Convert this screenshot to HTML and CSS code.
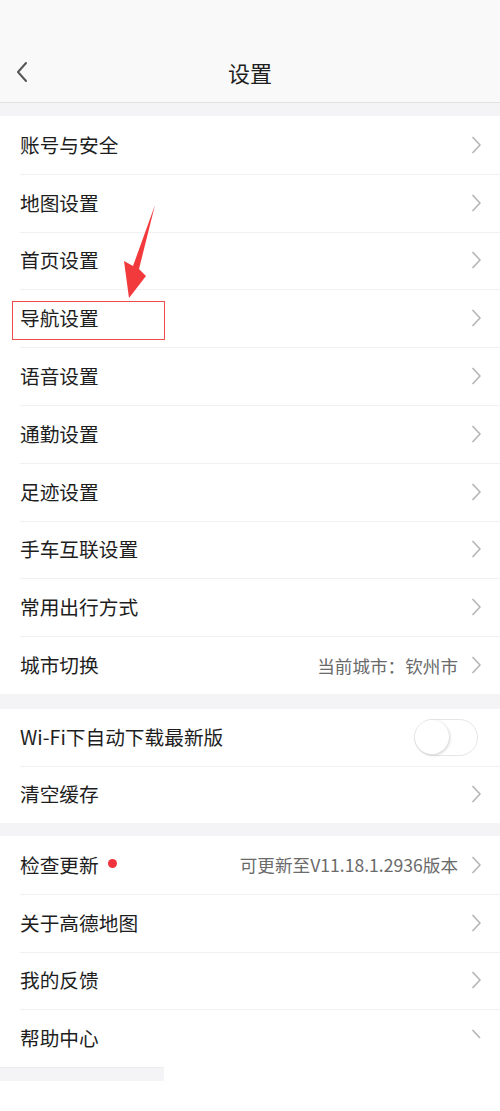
FILE: index.html
```html
<!DOCTYPE html>
<html lang="zh-CN">
<head>
<meta charset="utf-8">
<title>设置</title>
<link rel="stylesheet" href="styles.css">
</head>
<body>
<div class="page">
  <header class="topbar">
    <svg class="back" width="14" height="22" viewBox="0 0 14 22"><path d="M11 2 L3 11 L11 20" fill="none" stroke="#555" stroke-width="2" stroke-linecap="round" stroke-linejoin="round"/></svg>
    <h1 class="title">设置</h1>
  </header>

  <section class="group g1">
    <div class="row"><span class="label">账号与安全</span><svg class="chev" viewBox="0 0 10 18"><path d="M1.5 1 L9 9 L1.5 17" fill="none" stroke="#b4b4b4" stroke-width="1.6"/></svg></div>
    <div class="row"><span class="label">地图设置</span><svg class="chev" viewBox="0 0 10 18"><path d="M1.5 1 L9 9 L1.5 17" fill="none" stroke="#b4b4b4" stroke-width="1.6"/></svg></div>
    <div class="row"><span class="label">首页设置</span><svg class="chev" viewBox="0 0 10 18"><path d="M1.5 1 L9 9 L1.5 17" fill="none" stroke="#b4b4b4" stroke-width="1.6"/></svg></div>
    <div class="row row-marked"><span class="label">导航设置</span><svg class="chev" viewBox="0 0 10 18"><path d="M1.5 1 L9 9 L1.5 17" fill="none" stroke="#b4b4b4" stroke-width="1.6"/></svg><span class="mark-box"></span></div>
    <div class="row"><span class="label">语音设置</span><svg class="chev" viewBox="0 0 10 18"><path d="M1.5 1 L9 9 L1.5 17" fill="none" stroke="#b4b4b4" stroke-width="1.6"/></svg></div>
    <div class="row"><span class="label">通勤设置</span><svg class="chev" viewBox="0 0 10 18"><path d="M1.5 1 L9 9 L1.5 17" fill="none" stroke="#b4b4b4" stroke-width="1.6"/></svg></div>
    <div class="row"><span class="label">足迹设置</span><svg class="chev" viewBox="0 0 10 18"><path d="M1.5 1 L9 9 L1.5 17" fill="none" stroke="#b4b4b4" stroke-width="1.6"/></svg></div>
    <div class="row"><span class="label">手车互联设置</span><svg class="chev" viewBox="0 0 10 18"><path d="M1.5 1 L9 9 L1.5 17" fill="none" stroke="#b4b4b4" stroke-width="1.6"/></svg></div>
    <div class="row"><span class="label">常用出行方式</span><svg class="chev" viewBox="0 0 10 18"><path d="M1.5 1 L9 9 L1.5 17" fill="none" stroke="#b4b4b4" stroke-width="1.6"/></svg></div>
    <div class="row"><span class="label">城市切换</span><span class="value">当前城市：钦州市</span><svg class="chev" viewBox="0 0 10 18"><path d="M1.5 1 L9 9 L1.5 17" fill="none" stroke="#b4b4b4" stroke-width="1.6"/></svg></div>
  </section>

  <section class="group g2">
    <div class="row"><span class="label">Wi-Fi下自动下载最新版</span><span class="toggle"><span class="knob"></span></span></div>
    <div class="row"><span class="label">清空缓存</span><svg class="chev" viewBox="0 0 10 18"><path d="M1.5 1 L9 9 L1.5 17" fill="none" stroke="#b4b4b4" stroke-width="1.6"/></svg></div>
  </section>

  <section class="group g3">
    <div class="row"><span class="label">检查更新</span><span class="dot"></span><span class="value">可更新至V11.18.1.2936版本</span><svg class="chev" viewBox="0 0 10 18"><path d="M1.5 1 L9 9 L1.5 17" fill="none" stroke="#b4b4b4" stroke-width="1.6"/></svg></div>
    <div class="row"><span class="label">关于高德地图</span><svg class="chev" viewBox="0 0 10 18"><path d="M1.5 1 L9 9 L1.5 17" fill="none" stroke="#b4b4b4" stroke-width="1.6"/></svg></div>
    <div class="row"><span class="label">我的反馈</span><svg class="chev" viewBox="0 0 10 18"><path d="M1.5 1 L9 9 L1.5 17" fill="none" stroke="#b4b4b4" stroke-width="1.6"/></svg></div>
    <div class="row"><span class="label">帮助中心</span><svg class="chev" viewBox="0 0 10 18"><path d="M1.5 1 L9 9" fill="none" stroke="#b4b4b4" stroke-width="1.6"/></svg></div>
  </section>

  <div class="tail"><span class="tail-band"></span></div>

  <svg class="arrow" width="500" height="320" viewBox="0 0 500 320">
    <polygon points="155,205 139,269 146,276 129,298 124,261 133,266" fill="#f2393b"/>
  </svg>
</div>
</body>
</html>
```

FILE: styles.css
```css
* { box-sizing: border-box; }
html, body { margin: 0; padding: 0; background: #fff; }
body {
  font-family: "Noto Sans CJK SC", "Noto Sans", sans-serif;
  color: #1e1e1e;
}
.page {
  position: relative;
  width: 500px;
  min-height: 1111px;
  background: #f4f3f5;
}
.topbar {
  position: relative;
  height: 103px;
  background: #f9f9f9;
  border-bottom: 1px solid #e2e2e2;
  display: flex;
  align-items: flex-end;
  justify-content: center;
  padding-bottom: 15px;
}
.back {
  position: absolute;
  left: 15px;
  top: 61px;
}
.title {
  margin: 0;
  font-size: 22px;
  font-weight: 400;
  line-height: 30px;
  color: #1e1e1e;
}
.group {
  background: #fff;
}
.g1 { margin-top: 13px; }
.g2 { margin-top: 15px; }
.g3 { margin-top: 13px; }
.row {
  position: relative;
  display: flex;
  align-items: center;
  height: 57.8px;
  padding: 0 19px 0 20px;
}
.g2 .row { height: 57px; }
.row + .row::before {
  content: "";
  position: absolute;
  left: 20px;
  right: 0;
  top: 0;
  height: 1px;
  background: #f1f1f1;
}
.label {
  font-size: 19.7px;
  line-height: 28px;
  color: #1e1e1e;
  white-space: nowrap;
}
.value {
  margin-left: auto;
  font-size: 17.6px;
  color: #6a6a6a;
  white-space: nowrap;
  margin-right: 13px;
}
.chev {
  width: 10px;
  height: 18px;
  margin-left: auto;
  flex: none;
}
.value + .chev { margin-left: 0; }
.dot {
  width: 9px;
  height: 9px;
  border-radius: 50%;
  background: #f0323c;
  margin-left: 9px;
  margin-top: -2px;
}
.toggle {
  margin-left: auto;
  margin-right: 3px;
  position: relative;
  width: 64px;
  height: 37px;
  border-radius: 19px;
  border: 1.5px solid #e6e6e6;
  background: #fff;
}
.knob {
  position: absolute;
  left: 0;
  top: 0;
  width: 34px;
  height: 34px;
  border-radius: 50%;
  background: #fff;
  box-shadow: 1px 1px 3px rgba(0,0,0,0.18);
}
.mark-box {
  position: absolute;
  left: 12px;
  top: 12px;
  width: 153px;
  height: 39px;
  border: 1.5px solid #ee4b4b;
}
.tail {
  height: 44px;
  background: #fff;
  display: flex;
  flex-direction: column;
}
.tail-band {
  width: 164px;
  height: 14px;
  background: #f4f3f5;
  border-top: 1px solid #ececec;
}
.arrow {
  position: absolute;
  left: 0;
  top: 0;
  pointer-events: none;
}
```
